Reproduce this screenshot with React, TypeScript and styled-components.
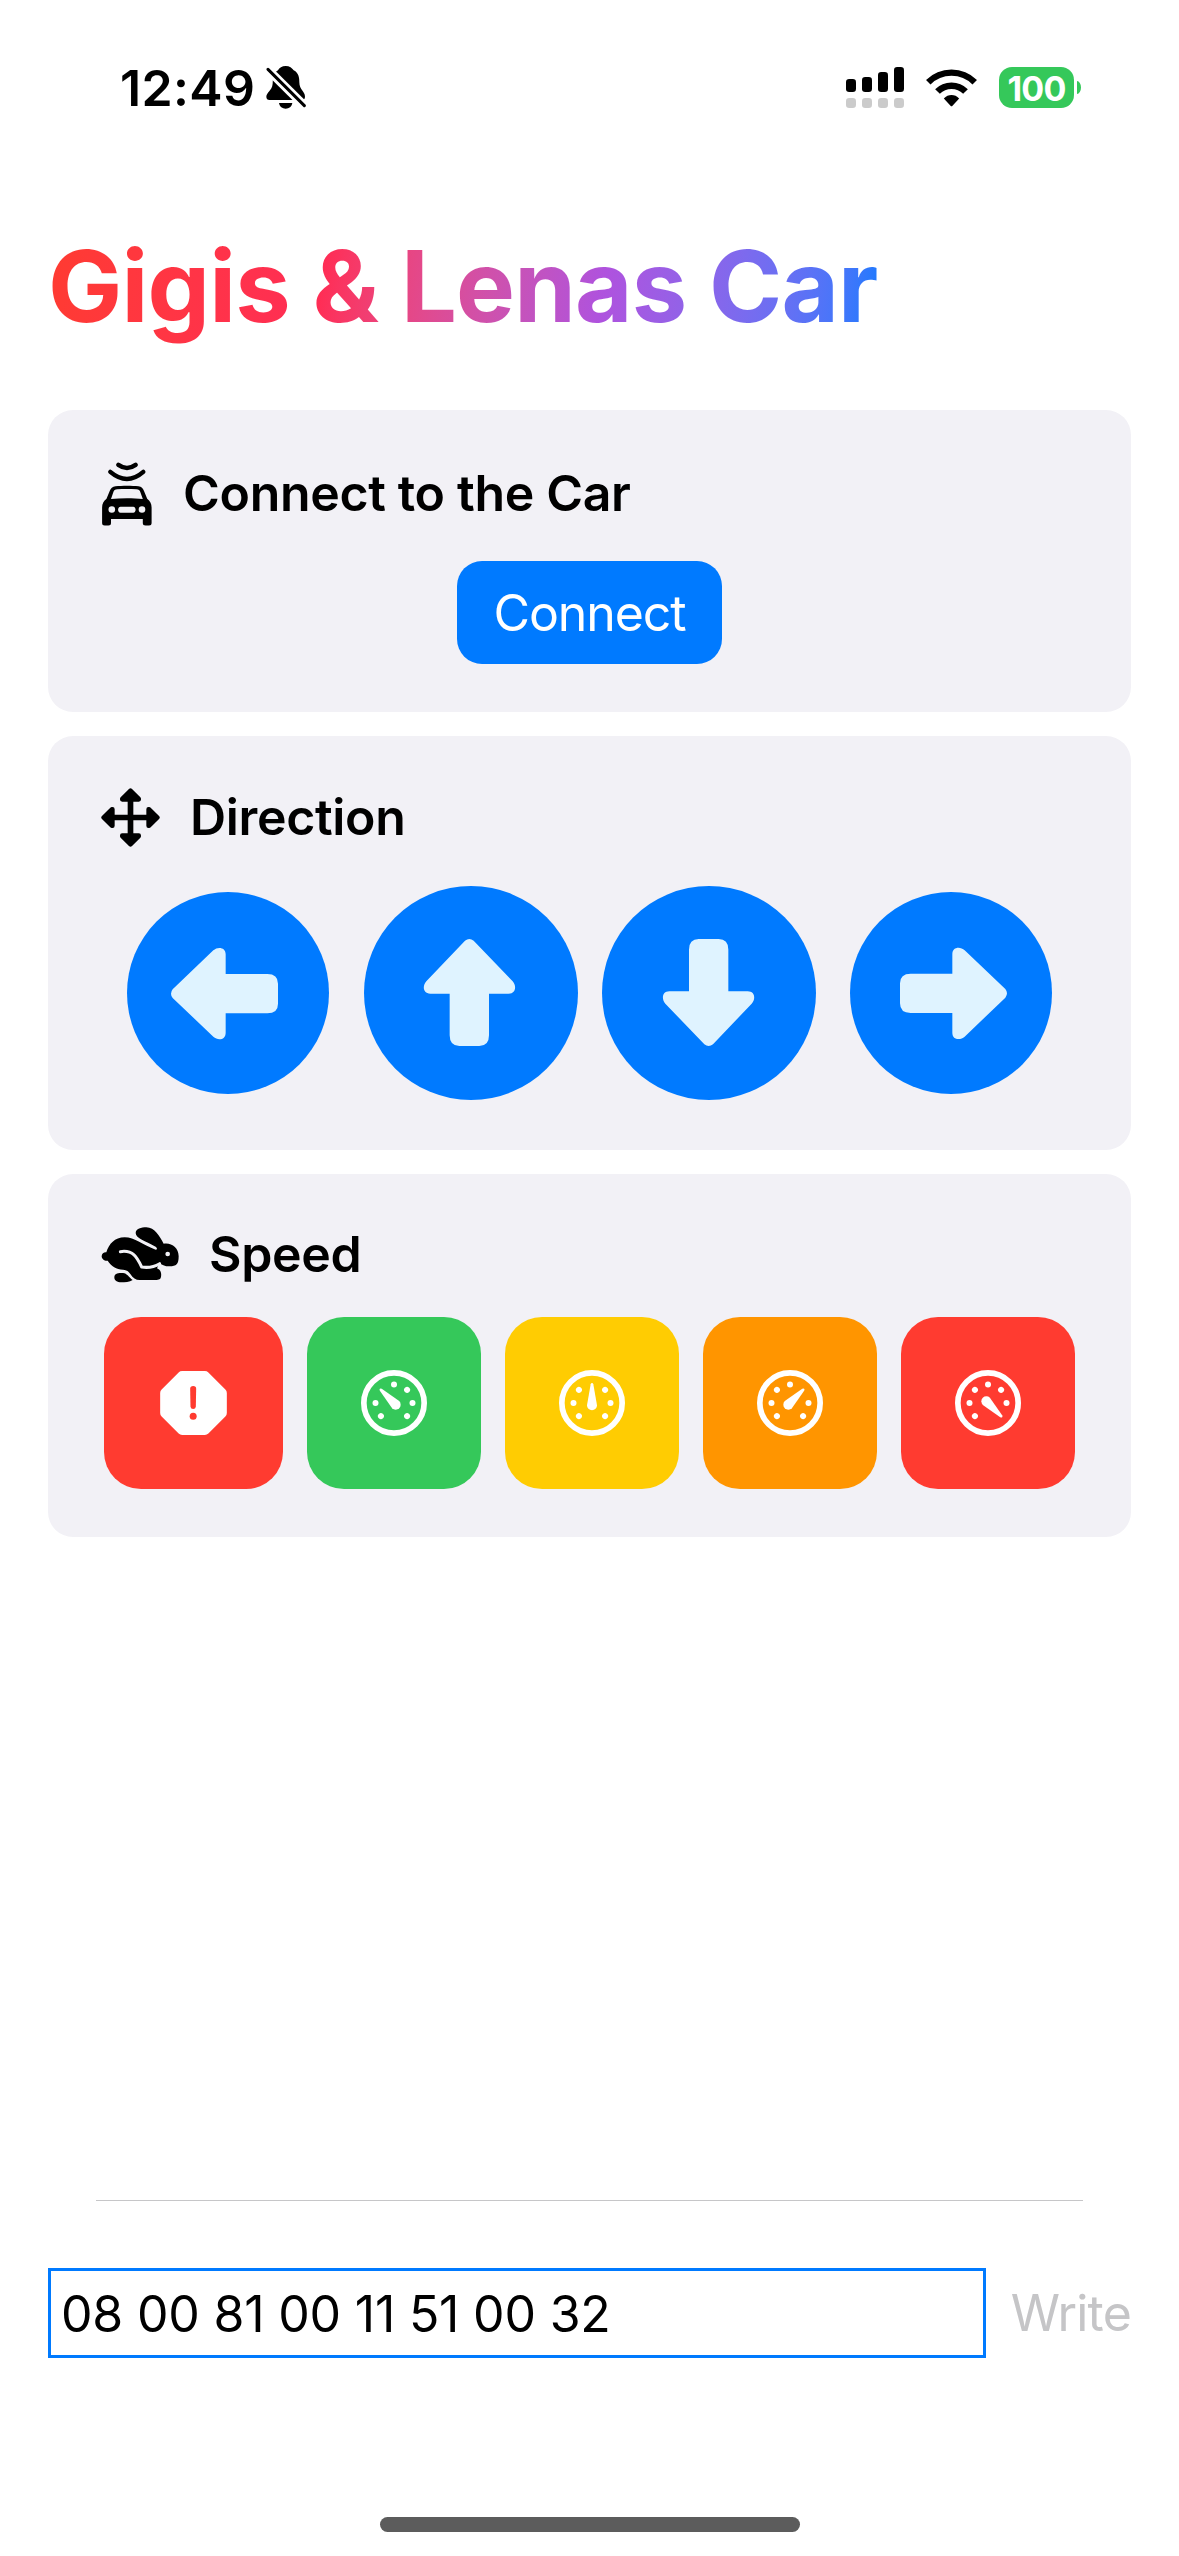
import React from 'react';
import styled, { createGlobalStyle } from 'styled-components';

const GlobalStyle = createGlobalStyle`
  *, *::before, *::after { box-sizing: border-box; }
  body { margin: 0; background: #fff; }
`;

const colors = {
  card: '#f2f1f6',
  blue: '#007aff',
  green: '#35c85a',
  yellow: '#ffcc02',
  orange: '#ff9500',
  red: '#ff3b30',
  arrow: '#dff3ff',
};

const Screen = styled.div`
  width: 1179px;
  height: 2556px;
  display: flex;
  flex-direction: column;
  background: #fff;
  color: #000;
  font-family: Inter, 'Liberation Sans', sans-serif;
  font-size: 50px;
  line-height: 61px;
  overflow: hidden;
  svg { display: block; flex: none; }
`;

const StatusBar = styled.header`
  height: 175px;
  padding: 0 98px 0 120px;
  display: flex;
  align-items: center;
  justify-content: space-between;
`;

const StatusGroup = styled.div<{ $gap: number }>`
  display: flex;
  align-items: center;
  gap: ${(p) => p.$gap}px;
`;

const Clock = styled.span`
  font-weight: 600;
  letter-spacing: 0.35px;
  padding-top: 1px;
`;

const Battery = styled.div`
  display: flex;
  align-items: center;
  gap: 3px;
`;

const BatteryBody = styled.div`
  width: 75px;
  height: 41px;
  border-radius: 13px;
  background: ${colors.green};
  color: #fff;
  font-size: 34px;
  font-weight: 700;
  line-height: 43px;
  letter-spacing: -0.8px;
  text-align: center;
`;

const BatteryNub = styled.div`
  width: 4px;
  height: 13px;
  border-radius: 0 4px 4px 0 / 0 6.5px 6.5px 0;
  background: ${colors.green};
`;

const Content = styled.main`
  flex: 1;
  display: flex;
  flex-direction: column;
  padding: 50px 48px 0;
`;

const Title = styled.h1`
  align-self: flex-start;
  margin: 0 0 63px;
  font-size: 99px;
  font-weight: 700;
  line-height: 122px;
  letter-spacing: -0.81px;
  color: transparent;
  background: linear-gradient(98.4deg in oklab, #ff3b30, #ff2d55, #af52de, ${colors.blue});
  background-clip: text;
  -webkit-background-clip: text;
`;

const Cards = styled.div`
  display: flex;
  flex-direction: column;
  gap: 24px;
`;

const Card = styled.section<{ $top: number; $bottom: number }>`
  display: flex;
  flex-direction: column;
  padding: ${(p) => p.$top}px 53px ${(p) => p.$bottom}px;
  border-radius: 25px;
  background: ${colors.card};
`;

const CardHeader = styled.h2`
  display: flex;
  align-items: center;
  gap: 30px;
  height: 61px;
  margin: 0;
  font-size: 50px;
  font-weight: 600;
  letter-spacing: -0.33px;
`;

const ConnectButton = styled.button`
  align-self: center;
  width: 265px;
  height: 103px;
  margin-top: 37px;
  padding: 1px 0 0;
  border: 0;
  border-radius: 25px;
  background: ${colors.blue};
  color: #fff;
  font: inherit;
  letter-spacing: -1.1px;
`;

const DirectionRow = styled.div`
  display: flex;
  align-items: center;
  justify-content: center;
  gap: 24px;
  height: 214px;
  margin-top: 38px;
`;

const RoundButton = styled.button<{ $size: number; $pad: string }>`
  display: flex;
  align-items: center;
  justify-content: center;
  flex: none;
  width: ${(p) => p.$size}px;
  height: ${(p) => p.$size}px;
  margin: 0 ${(p) => (p.$size < 214 ? 10.5 : 0)}px;
  padding: ${(p) => p.$pad};
  border: 0;
  border-radius: 50%;
  background: ${colors.blue};
`;

const SpeedRow = styled.div`
  display: flex;
  gap: 24px;
  margin: 32px 3px 0;
`;

const SpeedButton = styled.button<{ $color: string; $width: number }>`
  display: flex;
  align-items: center;
  justify-content: center;
  flex: none;
  width: ${(p) => p.$width}px;
  height: 172px;
  padding: 0;
  border: 0;
  border-radius: 37px;
  background: ${(p) => p.$color};
`;

const Divider = styled.hr`
  width: 987px;
  height: 1px;
  margin: auto auto 67px;
  border: 0;
  background: #c6c6c8;
`;

const CommandRow = styled.div`
  display: flex;
  align-items: center;
  justify-content: space-between;
`;

const CommandField = styled.div`
  width: 938px;
  height: 90px;
  padding: 13px 10px 0;
  border: 3px solid ${colors.blue};
  letter-spacing: -0.2px;
`;

const WriteButton = styled.button`
  padding: 1px 0 0;
  border: 0;
  background: none;
  color: #c5c5c7;
  font: inherit;
  letter-spacing: -0.8px;
`;

const HomeArea = styled.footer`
  display: flex;
  justify-content: center;
  padding: 159px 0 24px;
`;

const HomeIndicator = styled.div`
  width: 420px;
  height: 15px;
  border-radius: 8px;
  background: #5c5c5c;
`;

const BellSlashIcon = () => (
  <svg width="40" height="43" viewBox="529 81 120 129">
    <path d="M588 81C600 81 607 87 612 94C628 102 629 118 629 130C629 152 646 158 646 173C646 180 642 183 636 183H540C533 183 530 179 530 173C530 160 547 155 549 134C550 112 552 102 565 94C569 86 577 81 588 81Z" />
    <path d="M568 192H608C606 203 598 209 588 209C578 209 570 203 568 192Z" />
    <path d="M524 81L656 212" stroke="#fff" strokeWidth="26" />
    <path d="M535 91L644 200" stroke="#000" strokeWidth="9" strokeLinecap="round" />
  </svg>
);

const CellularIcon = () => (
  <svg width="58" height="41" viewBox="0 0 58 41">
    {[13, 15, 20, 25].map((h, i) => (
      <g key={h}>
        <rect x={i * 16} y={25 - h} width="10" height={h} rx="3.2" />
        <rect x={i * 16} y="31" width="10" height="10" rx="3.2" fill="#cbcbcb" />
      </g>
    ))}
  </svg>
);

const WifiIcon = () => (
  <svg width="51" height="38" viewBox="317.5 85.5 153 114">
    <g fill="none" stroke="#000">
      <path d="M324.3 125.3A98.5 98.5 0 0 1 463.7 125.3" strokeWidth="19" />
      <path d="M352 153A59.5 59.5 0 0 1 436 153" strokeWidth="20" />
    </g>
    <path d="M371 174C384 160 404 160 417 174L397 196Q394 199 391 196Z" />
  </svg>
);

const CarIcon = () => (
  <svg width="52" height="64" viewBox="0 0.5 52 64">
    <g fill="none" stroke="#000" strokeWidth="4.4" strokeLinecap="round">
      <path d="M17.4 3.4Q26 9.6 34.6 3.4" />
      <path d="M9.3 10.4Q26 24.6 42.3 10.4" />
    </g>
    <path
      fillRule="evenodd"
      d="M14.5 24.8C21 24 31 24 37.5 24.8C40.5 25.2 42 27 43 29.5L46.2 37.2C49 39.5 50.6 42 50.6 46V61.5Q50.6 64 48 64H44.5Q41.8 64 41.8 61.5V57.5H10V61.5Q10 64 7.4 64H3.7Q1.1 64 1.1 61.5V46C1.1 42 2.7 39.5 5.5 37.2L8.7 29.5C9.7 27 11.5 25.2 14.5 24.8ZM16.2 27.8C14 28 13 28.8 12.4 30.5L10 37.5C20 36.6 32 36.6 41.8 37.5L39.3 30.5C38.7 28.8 37.7 28 35.5 27.8C29 27.3 22.5 27.3 16.2 27.8ZM19.5 45.2C16.3 45.2 16.3 51.2 19.5 51.2H32.2C35.4 51.2 35.4 45.2 32.2 45.2Z"
    />
    <circle cx="10.8" cy="48" r="3.3" fill={colors.card} />
    <circle cx="41" cy="48" r="3.3" fill={colors.card} />
  </svg>
);

const MoveIcon = () => (
  <svg width="59" height="59" viewBox="63.5 54.5 177 177">
    <path d="M152 90V196M99 143H205" stroke="#000" strokeWidth="17" />
    {[0, 90, 180, 270].map((angle) => (
      <path
        key={angle}
        d="M152 62L177 87V89H127V87Z"
        transform={`rotate(${angle} 152 143)`}
        stroke="#000"
        strokeWidth="13"
        strokeLinejoin="round"
      />
    ))}
  </svg>
);

const HareIcon = () => (
  <svg width="78" height="56" viewBox="64 77 234 168">
    <path d="M168 95C168 82 185 78 200 78C225 78 240 105 252 127C275 123 297 138 297 165C297 190 290 195 270 195C255 195 245 190 240 184L232 201C246 206 246 222 243 230C240 236 230 236 222 236H180C168 236 160 230 152 218C145 208 140 206 130 205C110 204 95 195 84 178C76 180 66 174 66 165C66 156 74 152 80 153C88 128 105 108 135 108C165 108 190 132 228 145C234 144 233 139 225 135C195 118 168 110 168 95Z" />
    <path d="M122 151C160 145 172 168 186 197C205 200 225 196 240 187" fill="none" stroke={colors.card} strokeWidth="9" strokeLinecap="round" />
    <circle cx="264" cy="158" r="7" fill={colors.card} />
    <path d="M104 228C104 216 115 214 130 215C142 216 148 228 159 236C150 242 135 243 125 243C112 243 104 238 104 228Z" />
  </svg>
);

/* The arrow points left at 0 degrees. */
const ArrowIcon = ({ angle }: { angle: number }) => (
  <svg width="107" height="107" viewBox="273 507 321 321">
    <path
      transform={`rotate(${angle} 433.5 667.5)`}
      fill={colors.arrow}
      d="M278 655L400 538C413 526 437 528 437 550V609H562Q594 609 594 638V698Q594 727 562 727H437V785C437 808 413 809 400 797L278 681Q268 668 278 655Z"
    />
  </svg>
);

const StopIcon = () => (
  <svg width="67" height="64" viewBox="239.5 513 201 192">
    <path d="M306 528H374L425 579V639L374 690H306L255 639V579Z" fill="#fff" stroke="#fff" strokeWidth="30" strokeLinejoin="round" />
    <path d="M330 566Q330 558 339 558Q348 558 348 566L347 620Q346 627 339 627Q332 627 331 620Z" fill={colors.red} />
    <circle cx="339" cy="648.500" r="10.5" fill={colors.red} />
  </svg>
);

const dotAngles = [-135, -90, -45, 0, 45, 90, 135];

const GaugeIcon = ({ angle }: { angle: number }) => (
  <svg width="66" height="66" viewBox="-99 -99 198 198">
    <circle r="90.5" fill="none" stroke="#fff" strokeWidth="17" />
    {dotAngles
      .filter((dot) => dot !== angle)
      .map((dot) => (
        <circle key={dot} cy="-55.500" r="9" fill="#fff" transform={`rotate(${dot})`} />
      ))}
    <path
      d="M-4 -56Q-3 -60 0 -60Q3 -60 4 -56L15 7A15 15 0 1 1 -15 7Z"
      fill="#fff"
      transform={`rotate(${angle})`}
    />
  </svg>
);

const directions = [
  { name: 'Left', size: 202, angle: 0, pad: '0 7px 0 0' },
  { name: 'Forward', size: 214, angle: 90, pad: '0 3px 1px 0' },
  { name: 'Backward', size: 214, angle: 270, pad: '0 1px 1px 0' },
  { name: 'Right', size: 202, angle: 180, pad: '0 0 0 5px' },
];

const speeds = [
  { color: colors.green, angle: -45 },
  { color: colors.yellow, angle: 0 },
  { color: colors.orange, angle: 45 },
  { color: colors.red, angle: 135 },
];

export default function App() {
  return (
    <>
      <GlobalStyle />
      <Screen>
        <StatusBar>
          <StatusGroup $gap={11}>
            <Clock>12:49</Clock>
            <BellSlashIcon />
          </StatusGroup>
          <StatusGroup $gap={22}>
            <CellularIcon />
            <WifiIcon />
            <Battery>
              <BatteryBody>100</BatteryBody>
              <BatteryNub />
            </Battery>
          </StatusGroup>
        </StatusBar>

        <Content>
          <Title>Gigis &amp; Lenas Car</Title>

          <Cards>
            <Card $top={53} $bottom={48}>
              <CardHeader>
                <CarIcon />
                Connect to the Car
              </CardHeader>
              <ConnectButton>Connect</ConnectButton>
            </Card>

            <Card $top={51} $bottom={50}>
              <CardHeader>
                <MoveIcon />
                Direction
              </CardHeader>
              <DirectionRow>
                {directions.map((d) => (
                  <RoundButton key={d.name} $size={d.size} $pad={d.pad}>
                    <ArrowIcon angle={d.angle} />
                  </RoundButton>
                ))}
              </DirectionRow>
            </Card>

            <Card $top={50} $bottom={48}>
              <CardHeader>
                <HareIcon />
                Speed
              </CardHeader>
              <SpeedRow>
                <SpeedButton $color={colors.red} $width={179}>
                  <StopIcon />
                </SpeedButton>
                {speeds.map((s) => (
                  <SpeedButton key={s.angle} $color={s.color} $width={174}>
                    <GaugeIcon angle={s.angle} />
                  </SpeedButton>
                ))}
              </SpeedRow>
            </Card>
          </Cards>

          <Divider />
          <CommandRow>
            <CommandField>08 00 81 00 11 51 00 32</CommandField>
            <WriteButton>Write</WriteButton>
          </CommandRow>
        </Content>

        <HomeArea>
          <HomeIndicator />
        </HomeArea>
      </Screen>
    </>
  );
}
